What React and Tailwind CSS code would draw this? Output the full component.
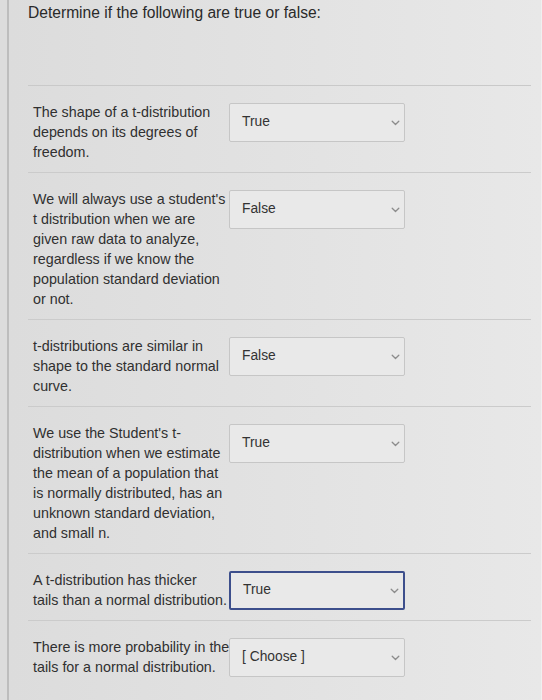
import React from "react";

const rows = [
  { text: ["The shape of a t-distribution", "depends on its degrees of", "freedom."], value: "True" },
  { text: ["We will always use a student's", "t distribution when we are", "given raw data to analyze,", "regardless if we know the", "population standard deviation", "or not."], value: "False" },
  { text: ["t-distributions are similar in", "shape to the standard normal", "curve."], value: "False" },
  { text: ["We use the Student's t-", "distribution when we estimate", "the mean of a population that", "is normally distributed, has an", "unknown standard deviation,", "and small n."], value: "True" },
  { text: ["A t-distribution has thicker", "tails than a normal distribution."], value: "True", focus: true },
  { text: ["There is more probability in the", "tails for a normal distribution."], value: "[ Choose ]" },
];

function Chevron() {
  return (
    <svg width="9" height="6" viewBox="0 0 9 6" fill="none">
      <path d="M1.2 1.2 L4.5 4.5 L7.8 1.2" stroke="#8c8c8c" strokeWidth="1.3" strokeLinecap="round" strokeLinejoin="round" />
    </svg>
  );
}

export default function App() {
  return (
    <div
      className="w-[542px] h-[700px] overflow-hidden bg-[#dcdcdc] text-[#2e2e2e] pl-[7px]"
      style={{ fontFamily: '"Liberation Sans", Arial, sans-serif' }}
    >
      <div className="h-full border-l-2 border-[#bdbdbd] bg-gradient-to-r from-[#dcdcdc] to-[#e8e8e8] pl-[19px] pr-[10px] border-r border-r-[#f0f0f0]">
        <div className="h-[86px] border-b border-[#c9c9c9] pt-[2px]">
          <div className="text-[15.6px] leading-[22px] text-[#2a2a2a]">Determine if the following are true or false:</div>
        </div>
        {rows.map((r, i) => (
          <div
            key={i}
            className={
              "flex pt-4 pb-[10px] pl-[5px] " +
              (i < rows.length - 1 ? "border-b border-[#cbcbcb]" : "")
            }
          >
            <div className="w-[195px] text-[14.3px] leading-5 text-[#303030]">
              {r.text.map((t, j) => (
                <div key={j} className="whitespace-nowrap">{t}</div>
              ))}
            </div>
            <div
              className={
                "ml-[1px] mt-[1px] w-[176px] h-[39px] flex items-center justify-between pl-[12px] pr-[4px] rounded-[2px] bg-[#e9e9e9] text-[13.8px] text-[#333] " +
                (r.focus ? "border-2 border-[#3d4f8c]" : "border border-[#c6c6c6]")
              }
            >
              <span>{r.value}</span>
              <Chevron />
            </div>
          </div>
        ))}
      </div>
    </div>
  );
}
